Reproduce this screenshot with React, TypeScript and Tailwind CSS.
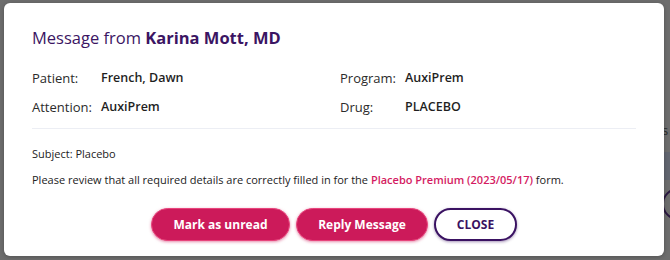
import React from 'react';

const font = { fontFamily: '"Open Sans", "Liberation Sans", sans-serif' };

const Field: React.FC<{ label: string; value: string; labelWidth: string }> = ({ label, value, labelWidth }) => (
  <div className="flex items-center h-[29px]">
    <span className={`${labelWidth} text-[13px] text-[#2b2b2b]`}>{label}</span>
    <span className="text-[12.5px] font-semibold text-[#1f1f1f]">{value}</span>
  </div>
);

export default function App() {
  return (
    <div className="relative w-[670px] h-[260px] bg-[#6d6d6d] overflow-hidden" style={font}>
      {/* page content peeking from behind the overlay */}
      <div className="absolute right-0 top-[124px] w-[8px] text-[13px] text-[#2a2a2a] leading-none">s</div>
      <div className="absolute right-0 top-[152px] w-[6px] h-[28px] bg-[#626670]" />
      <div className="absolute right-[-26px] top-[188px] w-[34px] h-[32px] rounded-full border-2 border-[#2a1840]" />

      <div className="absolute left-[4px] top-[3px] w-[660px] h-[253px] bg-white rounded-[6px] shadow-[0_1px_4px_rgba(0,0,0,0.25)] px-[28px] pt-[24px] flex flex-col">
        <h2 className="text-[16.5px] leading-[22px] text-[#3b1563]">
          Message from <span className="font-bold">Karina Mott, MD</span>
        </h2>

        <div className="grid grid-cols-[308px_1fr] mt-[15px]">
          <div className="flex flex-col">
            <Field label="Patient:" value="French, Dawn" labelWidth="w-[69px]" />
            <Field label="Attention:" value="AuxiPrem" labelWidth="w-[69px]" />
          </div>
          <div className="flex flex-col">
            <Field label="Program:" value="AuxiPrem" labelWidth="w-[65px]" />
            <Field label="Drug:" value="PLACEBO" labelWidth="w-[65px]" />
          </div>
        </div>

        <div className="mt-[6px] h-px bg-[#eceef4]" />

        <p className="mt-[17px] text-[11px] leading-[16px] text-[#222]">Subject: Placebo</p>
        <p className="mt-[10px] text-[11px] leading-[16px] text-[#222]">
          Please review that all required details are correctly filled in for the{' '}
          <span className="font-semibold text-[#d41b62]">Placebo Premium (2023/05/17)</span> form.
        </p>

        <div className="flex justify-center gap-[6px] mt-[20px]">
          <button className="h-[33px] w-[139px] rounded-full bg-[#cc1a5a] border border-[#e8447c] text-white text-[12px] font-bold shadow-[0_1px_3px_rgba(204,26,90,0.5)]">
            Mark as unread
          </button>
          <button className="h-[33px] w-[132px] rounded-full bg-[#cc1a5a] border border-[#e8447c] text-white text-[12px] font-bold shadow-[0_1px_3px_rgba(204,26,90,0.5)]">
            Reply Message
          </button>
          <button className="h-[33px] w-[83px] rounded-full bg-white border-2 border-[#3a1262] text-[#3a1262] text-[12px] font-bold shadow-[0_1px_3px_rgba(58,18,98,0.45)]">
            CLOSE
          </button>
        </div>
      </div>
    </div>
  );
}
